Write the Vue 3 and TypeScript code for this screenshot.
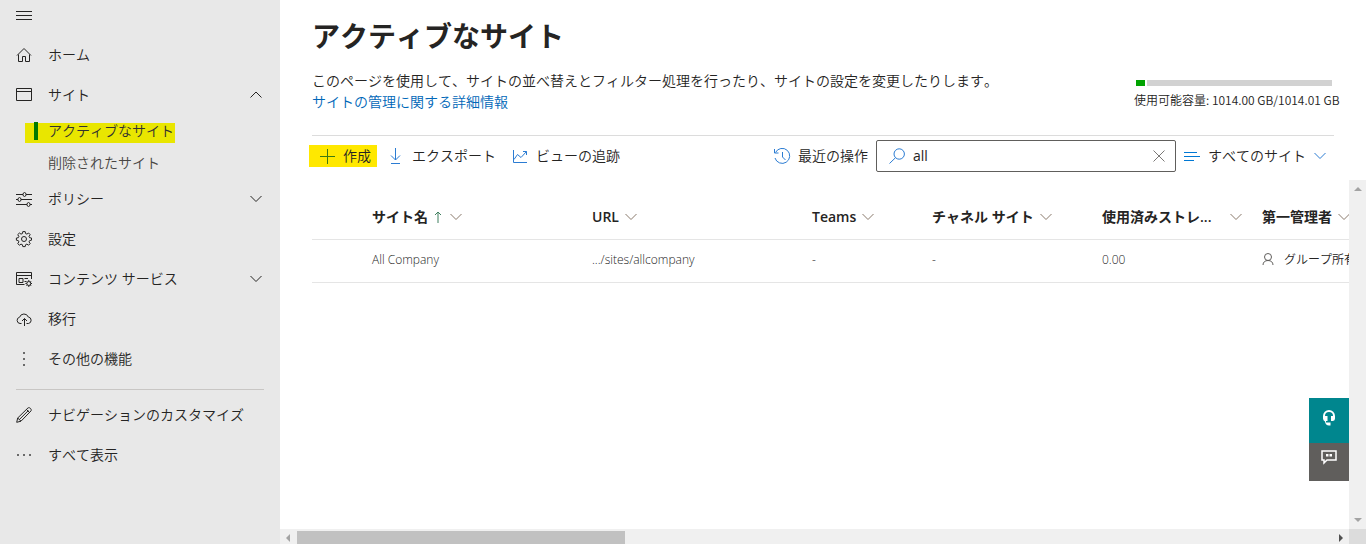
<script setup lang="ts">
import { ref } from 'vue'

type NavItem = { label: string; icon: string; expand?: 'up' | 'down'; children?: { label: string; active?: boolean }[] }

const primary: NavItem[] = [
  { label: 'ホーム', icon: 'home' },
  {
    label: 'サイト',
    icon: 'window',
    expand: 'up',
    children: [{ label: 'アクティブなサイト', active: true }, { label: '削除されたサイト' }],
  },
  { label: 'ポリシー', icon: 'sliders', expand: 'down' },
  { label: '設定', icon: 'gear' },
  { label: 'コンテンツ サービス', icon: 'content', expand: 'down' },
  { label: '移行', icon: 'cloud' },
  { label: 'その他の機能', icon: 'more-v' },
]
const secondary: NavItem[] = [
  { label: 'ナビゲーションのカスタマイズ', icon: 'pencil' },
  { label: 'すべて表示', icon: 'more-h' },
]

const icons: Record<string, string> = {
  home: 'M1 8.5 8 1.5l7 7M2.5 7.5v7h4v-5h3v5h4v-7',
  window: 'M.5 1.5h15v12H.5zM.5 4.5h15',
  sliders: 'M0 3.5h7M10 3.5h6M0 8.5h2M5 8.5h11M0 13.5h11M14 13.5h2M7 3.5a1.5 2 0 1 0 3 0a1.5 2 0 1 0-3 0M2 8.5a1.5 2 0 1 0 3 0a1.5 2 0 1 0-3 0M11 13.5a1.5 2 0 1 0 3 0a1.5 2 0 1 0-3 0',
  gear: 'M6.8.6h2.4l.4 2 1.3.5 1.7-1.1 1.6 1.7L13 5.3l.6 1.4 1.9.3v2.2l-1.9.4-.6 1.3 1.2 1.7-1.6 1.6-1.7-1.1-1.3.6-.4 1.9H6.8l-.4-1.9-1.4-.6-1.6 1.1-1.7-1.6L2.9 10.9l-.6-1.3-1.9-.4V7l1.9-.3.6-1.4-1.2-1.6L3.4 2 5 3.1l1.4-.5zM5.5 8a2.5 2.5 0 1 0 5 0a2.5 2.5 0 1 0-5 0',
  content: 'M8.5 13.5h-8v-12h15V8M.5 4.5h15M3 7.5h4v4H3zM8.5 7.5H12M8.5 10.5h1.5M10.8 12.5a2 2 0 1 0 4 0a2 2 0 1 0-4 0M12.8 9v1.5M12.8 14.5v1.5M9.4 12.5h1.4M14.8 12.5H16M10.5 10.2l.9.9M14.2 13.9l.9.9M10.5 14.8l.9-.9M14.2 11.1l.9-.9',
  cloud: 'M5.5 12.5H4a3.2 3.2 0 0 1-.4-6.3A4.6 4.6 0 0 1 12.3 6a3.3 3.3 0 0 1 .2 6.5h-2M8.5 15V7.5M6 10l2.5-2.5L11 10',
  pencil: 'M.7 15.3l1-4.3L12 .9c1.5-1 4 1.3 3 3L5 14.2zM1.7 11L5 14.2M10.5 2.5l3 3M3.3 12.6l9-9',
}

const query = ref('all')
const columns = [
  { key: 'name', label: 'サイト名', sorted: true },
  { key: 'url', label: 'URL' },
  { key: 'teams', label: 'Teams' },
  { key: 'channel', label: 'チャネル サイト' },
  { key: 'storage', label: '使用済みストレ...', spread: true },
  { key: 'admin', label: '第一管理者' },
]
const rows = [
  { name: 'All Company', url: '.../sites/allcompany', teams: '-', channel: '-', storage: '0.00', admin: 'グループ所有者' },
]
</script>

<template>
  <div class="app">
    <nav class="sidebar" aria-label="ナビゲーション">
      <button class="burger" aria-label="メニュー">
        <svg width="16" height="16" viewBox="0 0 16 16"><path d="M0 3.5h16M0 7.5h16M0 11.5h16" /></svg>
      </button>
      <template v-for="(group, g) in [primary, secondary]" :key="g">
        <hr v-if="g === 1" />
        <ul>
          <li v-for="item in group" :key="item.label">
            <button class="nav-item">
              <svg width="16" height="16" viewBox="0 0 16 16">
                <g v-if="item.icon === 'more-v'" class="dots"><path d="M7 1h2v2H7zM7 7h2v2H7zM7 13h2v2H7z" /></g>
                <g v-else-if="item.icon === 'more-h'" class="dots"><path d="M1 7h2v2H1zM7 7h2v2H7zM13 7h2v2h-2z" /></g>
                <path v-else :d="icons[item.icon]" />
              </svg>
              <span>{{ item.label }}</span>
              <svg v-if="item.expand" class="chevron" width="12" height="8" viewBox="0 0 12 8">
                <path :d="item.expand === 'up' ? 'M.5 6.5 6 1l5.5 5.5' : 'M.5 1 6 6.5 11.5 1'" />
              </svg>
            </button>
            <ul v-if="item.children">
              <li v-for="child in item.children" :key="child.label">
                <a href="#" class="sub" :class="{ active: child.active }"><span>{{ child.label }}</span></a>
              </li>
            </ul>
          </li>
        </ul>
      </template>
    </nav>

    <main>
      <header>
        <div class="intro">
          <h1>アクティブなサイト</h1>
          <p>このページを使用して、サイトの並べ替えとフィルター処理を行ったり、サイトの設定を変更したりします。</p>
          <a href="#">サイトの管理に関する詳細情報</a>
        </div>
        <div class="quota">
          <div class="meter"><i></i><b></b></div>
          <span>使用可能容量: 1014.00 GB/1014.01 GB</span>
        </div>
      </header>

      <div class="toolbar">
        <button class="cmd create">
          <svg width="16" height="16" viewBox="0 0 16 16"><path d="M1 8.5h15M8.5 1v15" /></svg>作成
        </button>
        <button class="cmd">
          <svg width="16" height="16" viewBox="0 0 16 16"><path d="M7.5 0v12M3 7.5l4.5 4.5L12 7.5M3 15.5h9" /></svg>エクスポート
        </button>
        <button class="cmd">
          <svg width="16" height="16" viewBox="0 0 16 16"><path d="M1.5 2v12.5H15M2 11.5l3.5-5L9 9.5l5.5-6M11 3.5h3.5V7" /></svg>ビューの追跡
        </button>
        <div class="right">
          <button class="cmd">
            <svg width="16" height="16" viewBox="0 0 16 16"><path d="M1.5 4.5A7.5 7.5 0 1 1 1 10M.5 1v4h4M8.5 4v5l3 3" /></svg>最近の操作
          </button>
          <div class="search">
            <svg width="16" height="16" viewBox="0 0 16 16"><path d="M5 6a5.2 5.2 0 1 0 10.4 0A5.2 5.2 0 1 0 5 6M6.5 9.7.5 15.5" /></svg>
            <input v-model="query" type="text" aria-label="検索" />
            <button class="clear" aria-label="クリア" @click="query = ''">
              <svg width="12" height="12" viewBox="0 0 12 12"><path d="M.5.5l11 11M11.5.5l-11 11" /></svg>
            </button>
          </div>
          <button class="cmd filter">
            <svg width="16" height="16" viewBox="0 0 16 16"><path d="M0 4.5h13M0 8.5h16M0 12.5h10" /></svg>すべてのサイト
            <svg class="chevron" width="12" height="8" viewBox="0 0 12 8"><path d="M.5 1 6 6.5 11.5 1" /></svg>
          </button>
        </div>
      </div>

      <div class="content">
        <div class="pane">
          <table>
            <colgroup>
              <col class="w60" /><col class="w220" /><col class="w220" /><col class="w120" /><col class="w170" /><col class="w160" /><col class="w220" />
            </colgroup>
            <thead>
              <tr>
                <th></th>
                <th v-for="c in columns" :key="c.key" scope="col">
                  <div class="th" :class="{ spread: c.spread }">
                    <span>{{ c.label }}</span>
                    <svg v-if="c.sorted" class="sort" width="8" height="12" viewBox="0 0 8 12"><path d="M4 12V1M1 4l3-3 3 3" /></svg>
                    <svg class="chevron" width="12" height="8" viewBox="0 0 12 8"><path d="M.5 1 6 6.5 11.5 1" /></svg>
                  </div>
                </th>
              </tr>
            </thead>
            <tbody>
              <tr v-for="r in rows" :key="r.name">
                <td></td>
                <td>{{ r.name }}</td>
                <td>{{ r.url }}</td>
                <td>{{ r.teams }}</td>
                <td>{{ r.channel }}</td>
                <td>{{ r.storage }}</td>
                <td>
                  <div class="admin">
                    <svg width="12" height="12" viewBox="0 0 12 12"><path d="M2.5 3a3.5 3.5 0 1 0 7 0a3.5 3.5 0 1 0-7 0M1 11c0-2.8 2-4.500 5-4.500s5 1.700 5 4.500" /></svg>
                    <span>{{ r.admin }}</span>
                  </div>
                </td>
              </tr>
            </tbody>
          </table>
          <div class="float">
            <button class="help" aria-label="ヘルプ">
              <svg width="16" height="18" viewBox="0 0 16 18">
                <path class="band" d="M3 9V7a5 5 0 0 1 10 0v2" />
                <path class="solid" d="M2 7h4.500v5H5v1.500h4.500v3H8Q4.500 16.500 4 12.500 2 11.500 2 9.500zM10 7h4v2.500q0 2-2 2.500h-2z" />
              </svg>
            </button>
            <button class="feedback" aria-label="フィードバック">
              <svg width="16" height="14" viewBox="0 0 16 14">
                <path class="bubble" d="M1 1h14v9H6l-3 3v-3H1z" />
                <path class="solid" d="M5 4h2.500v2.500H5zM8.500 4H11v2.500H8.500z" />
              </svg>
            </button>
          </div>
        </div>
        <div class="vbar" aria-hidden="true">
          <svg width="8" height="4" viewBox="0 0 8 4"><path d="M0 4 4 0l4 4z" /></svg>
          <svg width="8" height="4" viewBox="0 0 8 4"><path d="M0 0h8L4 4z" /></svg>
        </div>
      </div>
      <div class="hbar" aria-hidden="true">
        <div class="track">
          <svg width="4" height="8" viewBox="0 0 4 8"><path d="M4 0v8L0 4z" /></svg>
          <div class="thumb"></div>
          <svg class="dark" width="4" height="8" viewBox="0 0 4 8"><path d="M0 0v8l4-4z" /></svg>
        </div>
        <div class="corner"></div>
      </div>
    </main>
  </div>
</template>

<style>
body {
  margin: 0;
}
</style>

<style scoped>
.app {
  display: flex;
  min-height: 100vh;
  background: #fff;
  color: #252423;
  font: 14px/20px "Open Sans", "Noto Sans CJK JP", sans-serif;
  font-weight: 350;
  font-kerning: none;
}
.app * {
  box-sizing: border-box;
}
button,
input {
  font: inherit;
  font-kerning: inherit;
  color: inherit;
  background: none;
  border: 0;
  padding: 0;
  margin: 0;
}
a {
  color: #0067b8;
  text-decoration: none;
}
ul {
  list-style: none;
  margin: 0;
  padding: 0;
}
svg {
  display: block;
  flex: none;
  overflow: visible;
  fill: none;
  stroke: currentColor;
  stroke-width: 1;
}
.dots {
  fill: #6a6a6a;
  stroke: none;
}

.sidebar {
  flex: none;
  width: 280px;
  background: #e8e8e8;
}
.burger {
  display: flex;
  align-items: center;
  height: 35px;
  padding: 0 16px 4px;
}
.nav-item {
  display: flex;
  align-items: center;
  gap: 16px;
  width: 100%;
  height: 40px;
  padding: 0 18px 0 16px;
  text-align: left;
  white-space: nowrap;
}
.nav-item span {
  flex: 1;
}
.sub {
  display: flex;
  height: 32px;
  padding: 8px 0 0 25px;
  line-height: 16px;
  color: #484644;
}
.sub span {
  padding-left: 23px;
}
.sub.active {
  color: #323130;
}
.sub.active span {
  position: relative;
  height: 20px;
  padding-right: 1px;
  background: #e9e600;
}
.sub.active span::before {
  content: "";
  position: absolute;
  left: 9px;
  top: -1px;
  width: 4px;
  height: 18px;
  background: #007a00;
}
.sidebar hr {
  height: 1px;
  margin: 10px 16px 5px;
  border: 0;
  background: #c8c6c4;
}

main {
  flex: 1;
  min-width: 0;
  display: flex;
  flex-direction: column;
}
header {
  display: flex;
  justify-content: space-between;
  align-items: flex-end;
  margin: 0 32px;
  padding: 18px 0 23px;
  border-bottom: 1px solid #dcdcdc;
}
h1 {
  margin: 0 0 16px;
  font-size: 28px;
  line-height: 36px;
  font-weight: 700;
}
p {
  margin: 0;
}
p,
.intro a {
  display: block;
  line-height: 21px;
}
.quota {
  width: 200px;
  font-family: "Noto Sans CJK JP", sans-serif;
  font-size: 12px;
  white-space: nowrap;
  padding-bottom: 2px;
}
.meter {
  display: flex;
  gap: 2px;
  height: 6px;
  margin: 0 2px 4px;
}
.meter i {
  width: 9px;
  background: #00a300;
}
.meter b {
  flex: 1;
  background: #d2d2d2;
}

.toolbar {
  display: flex;
  align-items: center;
  gap: 16px;
  height: 44px;
  margin: 0 32px;
  padding-bottom: 4px;
}
.cmd {
  display: flex;
  align-items: center;
  gap: 8px;
  height: 22px;
  white-space: nowrap;
}
.cmd svg {
  color: #2b7cd3;
}
.create {
  margin: 0 -5px 0 -3px;
  padding: 0 6px 0 10px;
  background: #ffe800;
}
.create svg {
  color: #3d7a10;
}
.right {
  display: flex;
  align-items: center;
  gap: 8px;
  margin-left: auto;
}
.search {
  display: flex;
  align-items: center;
  gap: 8px;
  width: 300px;
  height: 32px;
  padding: 0 10px 0 12px;
  border: 1px solid #605e5c;
  border-radius: 2px;
}
.search > svg {
  color: #2b7cd3;
}
.search input {
  flex: 1;
  min-width: 0;
  outline: 0;
  font-weight: 400;
}
.clear {
  color: #7a7876;
}
.cmd.filter {
  padding-right: 8px;
}
.cmd.filter > svg:first-child {
  color: #0078d4;
}

.content {
  flex: 1;
  display: flex;
  min-height: 0;
}
.pane {
  position: relative;
  flex: 1;
  min-width: 0;
  overflow: hidden;
  padding: 15px 0 0 32px;
}
table {
  table-layout: fixed;
  width: 1170px;
  border-collapse: collapse;
  text-align: left;
}
.w60 {
  width: 60px;
}
.w120 {
  width: 120px;
}
.w160 {
  width: 160px;
}
.w170 {
  width: 170px;
}
.w220 {
  width: 220px;
}
th,
td {
  padding: 0;
  border-bottom: 1px solid #e5e5e5;
  white-space: nowrap;
}
th {
  height: 44px;
  font-weight: 600;
}
td {
  height: 43px;
  padding-bottom: 2px;
  font-size: 12px;
}
.th {
  display: flex;
  align-items: center;
  gap: 6px;
}
.th .chevron {
  color: #8a7a6c;
}
.spread {
  justify-content: space-between;
  padding-right: 20px;
}
.th .sort {
  margin-right: 2px;
  color: #3f7f5f;
}
.admin {
  display: flex;
  align-items: center;
  gap: 10px;
}
.admin svg {
  color: #605e5c;
}
.float {
  position: absolute;
  right: 0;
  bottom: 48px;
  width: 40px;
}
.float button {
  display: flex;
  justify-content: center;
  width: 100%;
}
.help {
  height: 45px;
  padding-top: 11px;
  background: #00868e;
}
.feedback {
  height: 38px;
  padding-top: 7px;
  background: #605e5c;
}
.band,
.bubble {
  stroke: #fff;
  stroke-width: 1.5;
}
.band {
  stroke-width: 2;
}
.solid {
  fill: #fff;
  stroke: none;
}
.vbar {
  display: flex;
  flex-direction: column;
  justify-content: space-between;
  align-items: center;
  width: 17px;
  padding: 7px 0;
  background: #f0f0f0;
}
.vbar svg,
.hbar svg {
  fill: #a3a3a3;
  stroke: none;
}
.hbar {
  display: flex;
  height: 15px;
  background: #f0f0f0;
}
.track {
  flex: 1;
  display: flex;
  align-items: center;
  justify-content: space-between;
  padding: 2px 6px 0;
}
.thumb {
  width: 31%;
  height: 13px;
  margin: 0 auto 0 7px;
  background: #c1c1c1;
}
.hbar .dark {
  fill: #505050;
}
.corner {
  width: 17px;
  background: #dcdcdc;
}
</style>
